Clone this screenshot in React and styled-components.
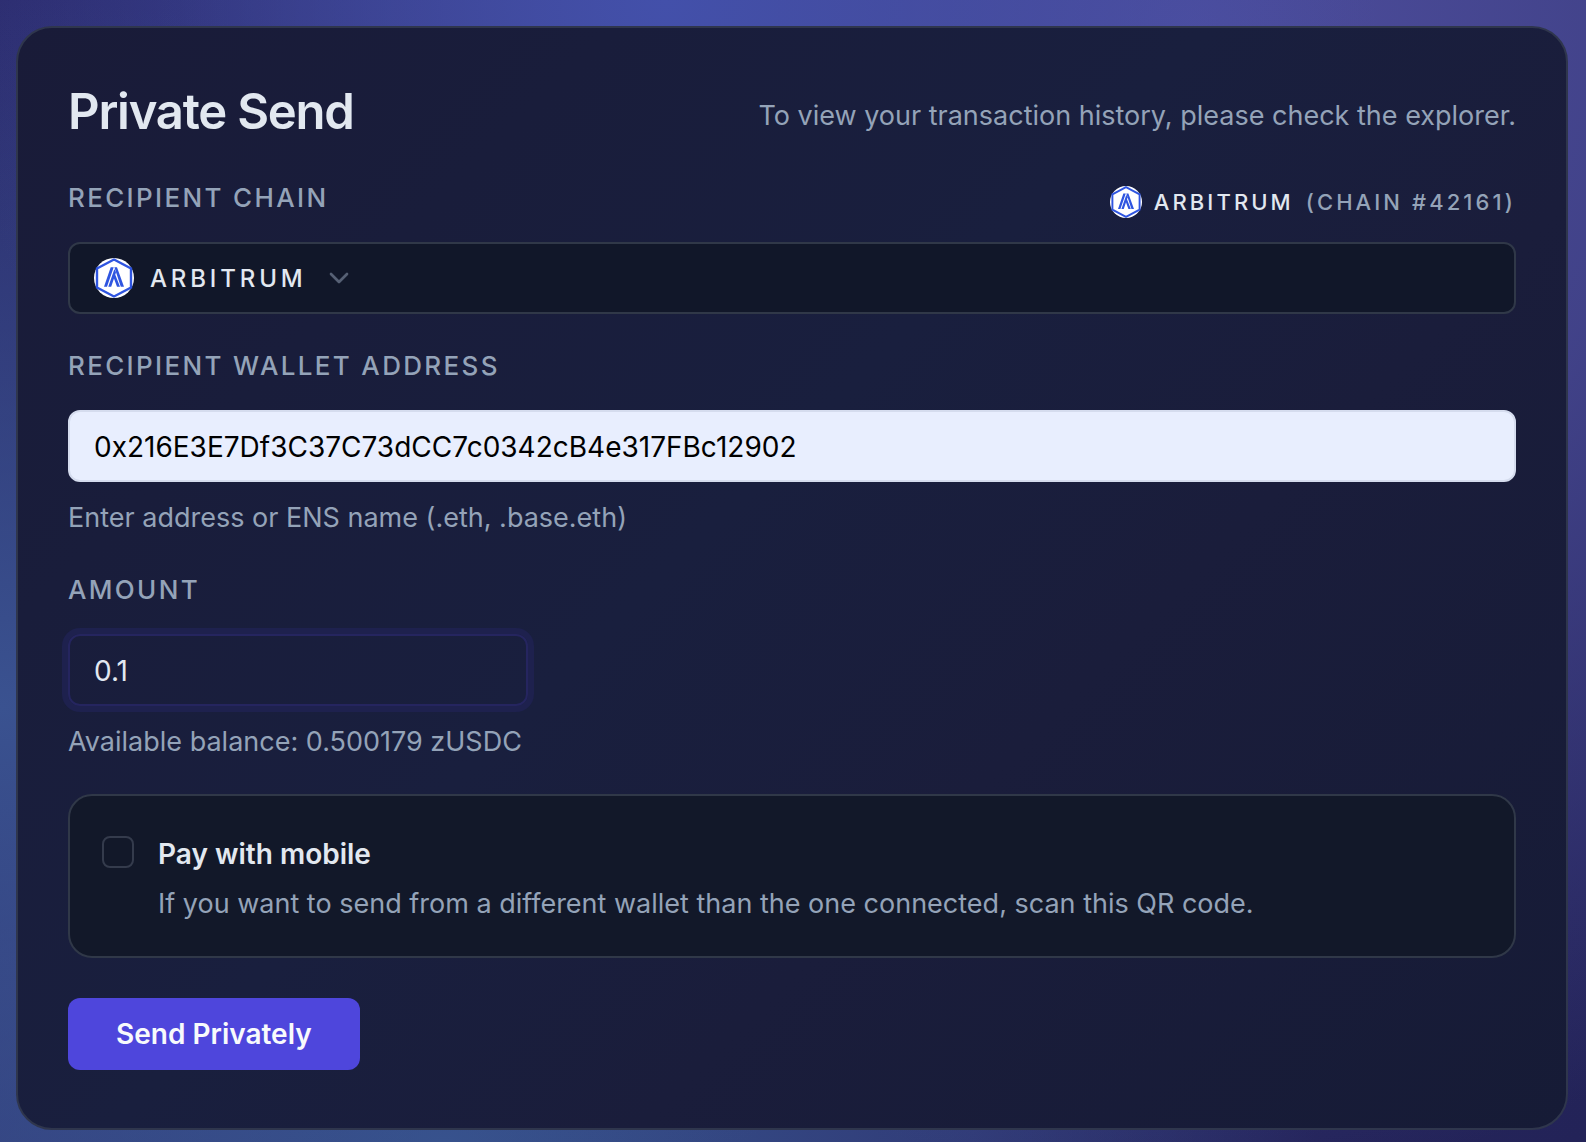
import React, { useState } from 'react';
import styled, { createGlobalStyle } from 'styled-components';
import { FiChevronDown } from 'react-icons/fi';

const GlobalStyle = createGlobalStyle`
  * {
    box-sizing: border-box;
  }

  body {
    margin: 0;
    color: #e2e8f0;
    background: #24245c;
    font-family: Inter, "Liberation Sans", sans-serif;
    font-size: 28px;
    line-height: 40px;
  }
`;

const Page = styled.main`
  min-height: 100vh;
  padding: 26px 18px 12px 16px;
  background:
    radial-gradient(ellipse 45% 60% at 42% 0%, rgba(67, 80, 170, 1), rgba(67, 80, 170, 0)),
    radial-gradient(ellipse 65% 100% at 75% 4%, rgba(77, 77, 157, 1), rgba(70, 71, 144, .85) 45%, rgba(60, 60, 130, 0)),
    radial-gradient(ellipse 60% 62% at 0% 62%, rgba(58, 82, 144, 1), rgba(50, 66, 128, 0)),
    radial-gradient(ellipse 55% 40% at 28% 100%, rgba(54, 82, 140, 1), rgba(54, 70, 132, .7) 60%, rgba(44, 50, 110, 0)),
    linear-gradient(135deg, #2c2c6e, #232358);
`;

const Card = styled.form`
  display: flex;
  flex-direction: column;
  padding: 56px 50px 58px;
  border: 2px solid #2f364d;
  border-radius: 36px;
  background: linear-gradient(135deg, #191b38, #191f3e 45%, #1a1d3b 65%, #161b36);
`;

const Row = styled.div`
  display: flex;
  align-items: ${props => props.$align};
  justify-content: space-between;
`;

const Title = styled.h1`
  margin: 0;
  font-size: 49px;
  font-weight: 600;
  line-height: 56px;
  letter-spacing: -0.025em;
`;

const Muted = styled.p`
  margin: 0;
  color: #94a3b8;
  font-size: 27px;
  line-height: 48px;
`;

const Hint = styled(Muted)`
  margin-top: 12px;
`;

const Field = styled.div`
  display: flex;
  flex-direction: column;
  margin-top: ${props => props.$top}px;
`;

const Label = styled.label`
  margin-bottom: 24px;
  color: #94a3b8;
  font-size: 26px;
  font-weight: 500;
  letter-spacing: 0.09em;
  text-transform: uppercase;
`;

const Network = styled.div`
  display: flex;
  align-items: center;
  gap: 12px;
  height: 48px;
  font-size: 22px;
  font-weight: 500;
  letter-spacing: 0.14em;
  text-transform: uppercase;

  span {
    color: #94a3b8;
  }
`;

const SelectBox = styled.div`
  display: flex;
  align-items: center;
  gap: 16px;
  height: 72px;
  padding: 0 24px;
  border: 2px solid #303848;
  border-radius: 12px;
  background: #111729;
`;

const Select = styled.select`
  appearance: none;
  padding: 2px 0 0;
  border: 0;
  outline: 0;
  color: inherit;
  background: transparent;
  font: inherit;
  font-size: 24px;
  font-weight: 500;
  letter-spacing: 0.16em;
`;

const Chevron = styled(FiChevronDown)`
  color: #566074;
  font-size: 32px;
  pointer-events: none;
`;

const Input = styled.input`
  width: 100%;
  height: 72px;
  padding: 2px 24px 0;
  border: 2px solid #d5dcee;
  border-radius: 12px;
  outline: 0;
  color: #000;
  background: #e8eefe;
  font: inherit;
`;

const AmountInput = styled(Input)`
  max-width: 460px;
  border-color: #25255f;
  color: #e2e8f0;
  background: transparent;
  box-shadow: 0 0 0 6px #1e214e;
`;

const Option = styled.div`
  display: flex;
  gap: 24px;
  margin-top: 28px;
  padding: 32px 32px 28px;
  border: 2px solid #303848;
  border-radius: 24px;
  background: #121829;
`;

const Checkbox = styled.input`
  appearance: none;
  flex: none;
  width: 32px;
  height: 32px;
  margin: 8px 0 0;
  border: 2px solid #343b4c;
  border-radius: 8px;

  &:checked {
    background: #4f46e0;
  }
`;

const OptionTitle = styled.label`
  display: block;
  font-weight: 600;
  line-height: 52px;
`;

const Button = styled.button`
  align-self: flex-start;
  height: 72px;
  margin-top: 40px;
  padding: 0 48px;
  border: 0;
  border-radius: 12px;
  color: #f8fafc;
  background: #4e46dc;
  cursor: pointer;
  font: inherit;
  font-weight: 600;
`;

const ArbitrumLogo = ({ size }) => (
  <svg width={size} height={size} viewBox="0 0 40 40" aria-hidden="true">
    <circle cx="20" cy="20" r="20" fill="#fff" />
    <path d="M20 1.5 37 10.5V29.5L20 38.5 3 29.5V10.5Z" fill="none" stroke="#2f55e0" strokeWidth="2.4" />
    <path
      d="M10 28.700 16.700 9.300H19.700L13 28.700ZM14.300 28.700 20.400 11 22 14.500 17.200 28.700ZM20.400 9.300H23L30 28.700H26.800ZM19.600 19.500 21 16 26 28.700H23Z"
      fill="#2f55e0"
    />
  </svg>
);

const App = () => {
  const [address, setAddress] = useState('0x216E3E7Df3C37C73dCC7c0342cB4e317FBc12902');
  const [amount, setAmount] = useState('0.1');

  return (
    <Page>
      <GlobalStyle />
      <Card onSubmit={e => e.preventDefault()}>
        <Row $align="flex-end">
          <Title>Private Send</Title>
          <Muted>To view your transaction history, please check the explorer.</Muted>
        </Row>
        <Field $top={38}>
          <Row $align="flex-start">
            <Label htmlFor="chain">Recipient chain</Label>
            <Network>
              <ArbitrumLogo size={32} />
              Arbitrum
              <span>(Chain #42161)</span>
            </Network>
          </Row>
          <SelectBox>
            <ArbitrumLogo size={40} />
            <Select id="chain">
              <option>ARBITRUM</option>
            </Select>
            <Chevron />
          </SelectBox>
        </Field>
        <Field $top={32}>
          <Label htmlFor="address">Recipient wallet address</Label>
          <Input id="address" value={address} onChange={e => setAddress(e.target.value)} />
          <Hint>Enter address or ENS name (.eth, .base.eth)</Hint>
        </Field>
        <Field $top={28}>
          <Label htmlFor="amount">Amount</Label>
          <AmountInput id="amount" value={amount} onChange={e => setAmount(e.target.value)} />
          <Hint>Available balance: 0.500179 zUSDC</Hint>
        </Field>
        <Option>
          <Checkbox id="mobile" type="checkbox" />
          <div>
            <OptionTitle htmlFor="mobile">Pay with mobile</OptionTitle>
            <Muted>If you want to send from a different wallet than the one connected, scan this QR code.</Muted>
          </div>
        </Option>
        <Button type="submit">Send Privately</Button>
      </Card>
    </Page>
  );
};

export default App;
